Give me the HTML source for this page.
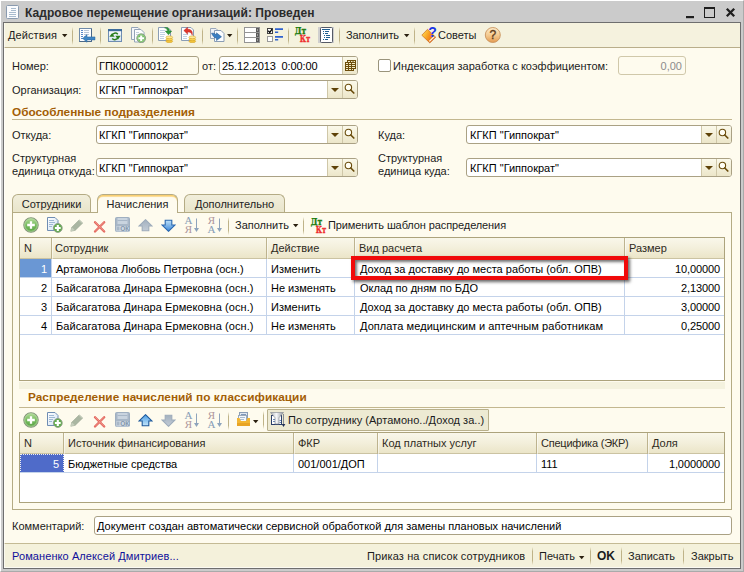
<!DOCTYPE html>
<html><head><meta charset="utf-8">
<style>
*{box-sizing:border-box;margin:0;padding:0}
html,body{width:744px;height:572px;overflow:hidden;background:#cbcbcb}
body{position:relative;font-family:"Liberation Sans",sans-serif;font-size:11px;color:#000;line-height:13px}
.a{position:absolute;white-space:nowrap}
#frame{left:0;top:0;width:744px;height:572px;background:#cbcbcb;border-left:1px solid #fff;border-top:1px solid #fff;border-right:1px solid #aaa;border-bottom:1px solid #aaa}
#inner{left:3px;top:22px;width:738px;height:547px;border:1px solid #6e6e6e;background:#fefbee}
#title{left:25px;top:6px;font-weight:bold;font-size:12px;color:#2a2a2a;line-height:14px;letter-spacing:0.05px}
#tb{left:4px;top:23px;width:736px;height:25px;background:#f5f2de;border-bottom:1px solid #b9ae8a}
.sep{width:1px;background:linear-gradient(rgba(190,178,136,0),#bfb388 25%,#bfb388 75%,rgba(190,178,136,0))}
.lbl{color:#1c1c1c}
.inp{background:#fff;border:1px solid #aaa184;border-radius:3px;height:19px;line-height:17px;padding-top:1px;padding-left:2px;font-size:11px;overflow:hidden}
.hd{font-weight:bold;color:#a35e05;font-size:11.8px;letter-spacing:0}
.hline{height:1px;background:#c3b78f}
.tab{height:18px;border:1px solid #b4ab84;border-bottom:none;border-radius:6px 6px 0 0;background:linear-gradient(#f1eedb,#e9e5cb);text-align:center;line-height:18px;color:#222}
.tab.act{background:#fefbee;height:19px;line-height:18px;box-shadow:inset 0 1.500px 0 #f9cf72,inset 0 3px 1px -1px rgba(250,214,130,.45)}
.grid{background:#fff;border:1px solid #aca37c}
.gh{background:linear-gradient(#f9f7ea,#f3efdb 50%,#ebe5c8);height:21px;border-bottom:1px solid #cbc3a2}
.vl{width:1px;background:#bdb38e;box-shadow:1px 0 0 rgba(255,255,255,.5)}
.cl{width:1px;background:#c4d3ea}
.rl{height:1px;background:#c4d3ea}
.dd{background:linear-gradient(#fbf9ea,#ece6c9);border-left:1px solid #cfc7a8;width:15px;height:17px}
</style></head><body>
<div class="a" id="frame"></div>
<div class="a" id="inner"></div>
<svg class="a" style="left:6px;top:5px" width="13" height="14" viewBox="0 0 13 14"><rect x=".5" y=".5" width="12" height="13" rx="1" fill="#fbfcfe" stroke="#8a9bb0"/><path d="M5 3.500h5M5 5.500h5M3 7.500h7M3 9.500h7M3 11.500h7" stroke="#a9bccf" stroke-width="1"/></svg>
<div class="a" id="title">Кадровое перемещение организаций: Проведен</div>
<svg class="a" style="left:684px;top:5px" width="54" height="15" viewBox="0 0 54 15"><rect x="2" y="11" width="8" height="2.200" fill="#1e1e1e"/><rect x="20.500" y="3" width="10" height="9.500" fill="none" stroke="#1e1e1e" stroke-width="1"/><rect x="20" y="2" width="11" height="2" fill="#1e1e1e"/><path d="M42.800 3.800l7.400 7.400M50.200 3.800l-7.400 7.400" stroke="#1e1e1e" stroke-width="2.300"/></svg>
<div class="a" id="tb"></div>
<div class="a lbl" style="left:8px;top:29px;letter-spacing:0.1px">Действия</div>
<svg class="a" style="left:62px;top:34px" width="6" height="4" viewBox="0 0 6 4"><path d="M0 0h5.400l-2.700 3.300z" fill="#2a2010"/></svg>
<div class="a sep" style="left:72px;top:27px;height:18px"></div>
<div class="a lbl" style="left:346px;top:29px;letter-spacing:-0.12px">Заполнить</div>
<svg class="a" style="left:404px;top:34px" width="6" height="4" viewBox="0 0 6 4"><path d="M0 0h5.400l-2.700 3.300z" fill="#2a2010"/></svg>
<div class="a sep" style="left:414px;top:27px;height:18px"></div>
<div class="a lbl" style="left:438px;top:29px">Советы</div>
<!-- main toolbar icons -->
<div class="a sep" style="left:100px;top:27px;height:18px"></div>
<div class="a sep" style="left:152px;top:27px;height:18px"></div>
<div class="a sep" style="left:202px;top:27px;height:18px"></div>
<div class="a sep" style="left:237px;top:27px;height:18px"></div>
<div class="a sep" style="left:288px;top:27px;height:18px"></div>
<div class="a sep" style="left:339px;top:27px;height:18px"></div>
<svg class="a" style="left:79px;top:28px" width="17" height="15" viewBox="0 0 17 15"><rect x=".5" y=".5" width="12" height="13" fill="#fdfeff" stroke="#6f8aa8"/><path d="M12.500 1v12.500h-12" fill="none" stroke="#4a6888"/><path d="M2 2.500h2M2 4.500h2M2 6.500h2M2 8.500h2M2 10.500h2" stroke="#5a8ac8"/><path d="M5 2.500h5M5 4.500h5M5 6.500h5M5 8.500h2" stroke="#b9c6d6"/><path d="M3.700 10.400l4.300-3.800v2.300h8v3h-8v2.400z" fill="#3f86c4" stroke="#2c699f" stroke-width=".5"/></svg>
<svg class="a" style="left:108px;top:29px" width="14" height="13" viewBox="0 0 14 13"><defs><linearGradient id="wg" x1="0" y1="0" x2="0" y2="1"><stop offset="0" stop-color="#fff"/><stop offset="1" stop-color="#d3e2f1"/></linearGradient></defs><rect x=".5" y=".5" width="13" height="12" fill="url(#wg)" stroke="#6f8db3"/><rect x="0" y="0" width="14" height="2.200" fill="#3d6c9c"/><path d="M4 6.500a3.300 3 0 0 1 5.800-1.300M10 8.200a3.300 3 0 0 1-5.800 1.300" fill="none" stroke="#2a7d1c" stroke-width="1.500"/><path d="M1.300 7.800l2.700-3.600 2.700 3.600z" fill="#2a7d1c"/><path d="M12.700 6.800l-2.700 3.600-2.700-3.600z" fill="#2a7d1c"/></svg>
<svg class="a" style="left:130px;top:27px" width="17" height="16" viewBox="0 0 17 16"><path d="M1.500.5h6.500l2 2v10h-8.500z" fill="#f4f6f9" stroke="#94a4b8"/><path d="M4.500 2.500h6.500l3 3v9.500h-9.500z" fill="#fdfeff" stroke="#94a4b8"/><path d="M6 5.500h3M6 7.500h3" stroke="#c4d0de"/><circle cx="11.200" cy="11.200" r="4.400" fill="#6cba5c" stroke="#8a9a84" stroke-width=".9"/><circle cx="11.200" cy="11.200" r="3.600" fill="none" stroke="#a9d89c" stroke-width=".6"/><path d="M11.200 8.400v5.600M8.400 11.200h5.600" stroke="#fff" stroke-width="2.100"/></svg>
<svg class="a" style="left:158px;top:27px" width="16" height="16" viewBox="0 0 16 16"><path d="M.5.500h9.500l2.500 2.500v10.500h-12z" fill="#fdfeff" stroke="#8a9db5"/><path d="M2 3.500h5M2 5.500h5M2 7.500h5M2 9.500h4M2 11.500h4" stroke="#c0d0e2" /><path d="M6.500.8c3-.8 5 .5 5 3.200h2.300l-3.300 3.800-3.300-3.800h2.300c0-1.500-1-2.500-3-3.200z" fill="#2f9a3a" stroke="#1f7528" stroke-width=".4"/><ellipse cx="11.300" cy="14.300" rx="3.400" ry="1.400" fill="#f3c33a" stroke="#cf9c1c" stroke-width=".5"/><ellipse cx="11.300" cy="12.300" rx="3.400" ry="1.400" fill="#f9d458" stroke="#cf9c1c" stroke-width=".5"/><ellipse cx="11.300" cy="10.300" rx="3.400" ry="1.400" fill="#ffe993" stroke="#cf9c1c" stroke-width=".5"/></svg>
<svg class="a" style="left:181px;top:27px" width="16" height="16" viewBox="0 0 16 16"><path d="M.5.500h9.500l2.500 2.500v10.500h-12z" fill="#fdfeff" stroke="#8a9db5"/><path d="M2 7.500h5M2 9.500h4M2 11.500h4" stroke="#c0d0e2"/><path d="M2.800 3.600l3.800-3.400v2.100c3.600-.2 5.400 2 4.600 6-.7-2.600-2-3.400-4.600-3.300v2.200z" fill="#e0352c" stroke="#b01e18" stroke-width=".4"/><ellipse cx="11.300" cy="14.300" rx="3.400" ry="1.400" fill="#f3c33a" stroke="#cf9c1c" stroke-width=".5"/><ellipse cx="11.300" cy="12.300" rx="3.400" ry="1.400" fill="#f9d458" stroke="#cf9c1c" stroke-width=".5"/><ellipse cx="11.300" cy="10.300" rx="3.400" ry="1.400" fill="#ffe993" stroke="#cf9c1c" stroke-width=".5"/></svg>
<svg class="a" style="left:210px;top:28px" width="15" height="14" viewBox="0 0 15 14"><path d="M.5.500h5.500l2 2v8h-7.500z" fill="#eef1f5" stroke="#9aa8ba"/><path d="M4.500 2.500h6.500l3 3v8h-9.500z" fill="#fbfdff" stroke="#8a9db5"/><path d="M1.500 5.200c2.500-.2 4 .5 5 1.800v-2.200l5 4-5 3.700v-2.300c-2-.3-3.500-1.800-5-5z" fill="#3a7ec2" stroke="#1f558f" stroke-width=".5"/></svg>
<svg class="a" style="left:227px;top:34px" width="6" height="4" viewBox="0 0 6 4"><path d="M0 0h5.400l-2.700 3.300z" fill="#2a2010"/></svg>
<svg class="a" style="left:244px;top:27px" width="16" height="16" viewBox="0 0 16 16"><g fill="#fff" stroke="#949494"><rect x=".5" y=".5" width="15" height="5"/><rect x=".5" y="5.500" width="15" height="5"/><rect x=".5" y="10.500" width="15" height="5"/></g><g fill="#5c5c5c"><rect x="12" y="1" width="3" height="4"/><rect x="12" y="6" width="3" height="4"/><rect x="12" y="11" width="3" height="4"/></g><g fill="#d8d8d8"><rect x="13" y="2.500" width="1" height="1"/><rect x="13" y="7.500" width="1" height="1"/><rect x="13" y="12.500" width="1" height="1"/></g></svg>
<svg class="a" style="left:267px;top:28px" width="17" height="14" viewBox="0 0 17 14"><rect x=".5" y=".5" width="5" height="5" fill="#fff" stroke="#444"/><path d="M1.300 2.800l1.500 1.700 2.200-3.300" stroke="#000" fill="none" stroke-width="1.300"/><rect x=".5" y="8.500" width="5" height="5" fill="#fff" stroke="#9a9a9a"/><path d="M8 1.200h8M8 8.800h8" stroke="#2f62cf" stroke-width="1.800"/><path d="M8 4.200h3.200M8 11.800h3.200" stroke="#2f62cf" stroke-width="1.600"/></svg>
<svg class="a" style="left:293px;top:27px" width="20" height="17" viewBox="0 0 20 17"><text x="1.700" y="6.900" textLength="11.500" lengthAdjust="spacingAndGlyphs" font-family="DejaVu Serif,serif" font-weight="bold" font-size="8.400" fill="#1c7c10" stroke="#1c7c10" stroke-width=".35">Дт</text><text x="6.700" y="14.600" textLength="10.500" lengthAdjust="spacingAndGlyphs" font-family="DejaVu Serif,serif" font-weight="bold" font-size="8.400" fill="#ee2e2e" stroke="#ee2e2e" stroke-width=".35">Кт</text></svg>
<svg class="a" style="left:318px;top:26px" width="16" height="18" viewBox="0 0 16 18"><rect x="0" y="1" width="16" height="16" fill="#cfcfcf"/><rect x="2.500" y="1.500" width="12" height="15" rx="1" fill="#fff" stroke="#555a66"/><path d="M4 3.500h8" stroke="#1f5f8f"/><path d="M5 5.500h1M7 5.500h4M5 7.500h1M7 7.500h3M6 9.500h1M8 9.500h4M6 11.500h1M8 11.500h4M5 13.500h1M7 13.500h3" stroke="#1f5f8f"/></svg>
<svg class="a" style="left:420px;top:26px" width="18" height="18" viewBox="0 0 18 18"><defs><linearGradient id="bk" x1="0" y1=".3" x2="1" y2=".8"><stop offset="0" stop-color="#ffdc50"/><stop offset=".45" stop-color="#f79a20"/><stop offset="1" stop-color="#d8501a"/></linearGradient></defs><path d="M1.800 9.200l5.700-5.900 8.200 7.900-5.900 5.700z" fill="url(#bk)" stroke="#c05a14" stroke-width=".6"/><path d="M9.300 15.400l5-4.900" stroke="#fff4e0" stroke-width="1.300"/><text x="8.300" y="10.500" font-family="Liberation Sans,sans-serif" font-weight="bold" font-size="14" fill="#1a36e6">?</text></svg>
<svg class="a" style="left:484px;top:26px" width="18" height="18" viewBox="0 0 18 18"><defs><linearGradient id="hg" x1="0" y1="0" x2="0" y2="1"><stop offset="0" stop-color="#fdeccb"/><stop offset=".55" stop-color="#f3c88c"/><stop offset="1" stop-color="#e49a50"/></linearGradient></defs><circle cx="8.800" cy="9" r="7.500" fill="url(#hg)" stroke="#c8935c" stroke-width=".9"/><text x="8.800" y="13.200" text-anchor="middle" font-family="Liberation Sans,sans-serif" font-size="12" fill="#5e3c1a" stroke="#5e3c1a" stroke-width=".35">?</text></svg>

<div class="a lbl" style="left:12px;top:60px">Номер:</div>
<div class="a inp" style="left:96px;top:56px;width:103px;background:#fefbee;">ГПК00000012</div>
<div class="a lbl" style="left:202px;top:60px">от:</div>
<div class="a inp" style="left:219px;top:56px;width:139px;letter-spacing:-0.13px;">25.12.2013&nbsp; 0:00:00</div><div class="a dd" style="left:342px;top:57px;border-radius:0 2px 2px 0"></div><svg class="a" style="left:345px;top:60px" width="11" height="11" viewBox="0 0 11 11"><path d="M2 0h9v9h-2v2h-9v-9h2z" fill="#6e4e0c"/><path d="M3 1.500h2M6 1.500h1.500M8.500 1.500h1.500M1 3.500h2M4 3.500h2M7 3.500h3M1 5.500h2M4 5.500h2M7 5.500h3M1 7.500h2M4 7.500h2M7 7.500h3M1 9.500h2M4 9.500h2M7 9.500h1" stroke="#f4ecc6" stroke-width="1"/></svg>
<div class="a" style="left:378px;top:59px;width:13px;height:13px;border:1px solid #9a947c;border-radius:2px;background:#fff"></div>
<div class="a lbl" style="left:393px;top:60px">Индексация заработка с коэффициентом:</div>
<div class="a inp" style="left:618px;top:56px;width:68px;background:#fefbee;border-color:#d0c8aa;color:#8c8c8c;text-align:right;padding-right:3px;">0,00</div>
<div class="a lbl" style="left:12px;top:84px">Организация:</div>
<div class="a inp" style="left:96px;top:80px;width:262px;">КГКП "Гиппократ"</div><div class="a dd" style="left:327px;top:81px"></div><div class="a dd" style="left:342px;top:81px;border-radius:0 2px 2px 0"></div><div class="a" style="left:331px;top:88px;border:4px solid transparent;border-top:4px solid #5e4208;border-bottom:none;width:0;height:0"></div><svg class="a" style="left:344px;top:83px" width="12" height="12" viewBox="0 0 12 12"><circle cx="4.400" cy="4.500" r="3.200" fill="#fffef4" stroke="#6a4c0c" stroke-width="1.100"/><path d="M6.800 7l3 3" stroke="#6a4c0c" stroke-width="1.700" stroke-linecap="round"/></svg>
<div class="a hd" style="left:12px;top:106px">Обособленные подразделения</div>
<div class="a hline" style="left:12px;top:119px;width:720px"></div>
<div class="a lbl" style="left:12px;top:129px">Откуда:</div>
<div class="a inp" style="left:96px;top:125px;width:262px;">КГКП "Гиппократ"</div><div class="a dd" style="left:327px;top:126px"></div><div class="a dd" style="left:342px;top:126px;border-radius:0 2px 2px 0"></div><div class="a" style="left:331px;top:133px;border:4px solid transparent;border-top:4px solid #5e4208;border-bottom:none;width:0;height:0"></div><svg class="a" style="left:344px;top:128px" width="12" height="12" viewBox="0 0 12 12"><circle cx="4.400" cy="4.500" r="3.200" fill="#fffef4" stroke="#6a4c0c" stroke-width="1.100"/><path d="M6.800 7l3 3" stroke="#6a4c0c" stroke-width="1.700" stroke-linecap="round"/></svg>
<div class="a lbl" style="left:378px;top:129px">Куда:</div>
<div class="a inp" style="left:466px;top:125px;width:266px;padding-left:3px;">КГКП "Гиппократ"</div><div class="a dd" style="left:701px;top:126px"></div><div class="a dd" style="left:716px;top:126px;border-radius:0 2px 2px 0"></div><div class="a" style="left:705px;top:133px;border:4px solid transparent;border-top:4px solid #5e4208;border-bottom:none;width:0;height:0"></div><svg class="a" style="left:718px;top:128px" width="12" height="12" viewBox="0 0 12 12"><circle cx="4.400" cy="4.500" r="3.200" fill="#fffef4" stroke="#6a4c0c" stroke-width="1.100"/><path d="M6.800 7l3 3" stroke="#6a4c0c" stroke-width="1.700" stroke-linecap="round"/></svg>
<div class="a lbl" style="left:12px;top:152px">Структурная<br>единица откуда:</div>
<div class="a inp" style="left:96px;top:158px;width:262px;">КГКП "Гиппократ"</div><div class="a dd" style="left:327px;top:159px"></div><div class="a dd" style="left:342px;top:159px;border-radius:0 2px 2px 0"></div><div class="a" style="left:331px;top:166px;border:4px solid transparent;border-top:4px solid #5e4208;border-bottom:none;width:0;height:0"></div><svg class="a" style="left:344px;top:161px" width="12" height="12" viewBox="0 0 12 12"><circle cx="4.400" cy="4.500" r="3.200" fill="#fffef4" stroke="#6a4c0c" stroke-width="1.100"/><path d="M6.800 7l3 3" stroke="#6a4c0c" stroke-width="1.700" stroke-linecap="round"/></svg>
<div class="a lbl" style="left:378px;top:152px">Структурная<br>единица куда:</div>
<div class="a inp" style="left:466px;top:158px;width:266px;padding-left:3px;">КГКП "Гиппократ"</div><div class="a dd" style="left:701px;top:159px"></div><div class="a dd" style="left:716px;top:159px;border-radius:0 2px 2px 0"></div><div class="a" style="left:705px;top:166px;border:4px solid transparent;border-top:4px solid #5e4208;border-bottom:none;width:0;height:0"></div><svg class="a" style="left:718px;top:161px" width="12" height="12" viewBox="0 0 12 12"><circle cx="4.400" cy="4.500" r="3.200" fill="#fffef4" stroke="#6a4c0c" stroke-width="1.100"/><path d="M6.800 7l3 3" stroke="#6a4c0c" stroke-width="1.700" stroke-linecap="round"/></svg>
<div class="a" style="left:12px;top:212px;width:720px;height:298px;border:1px solid #b4ab84;background:#fefbee"></div>
<div class="a tab" style="left:12px;top:194px;width:79px">Сотрудники</div>
<div class="a tab act" style="left:97px;top:194px;width:81px">Начисления</div>
<div class="a tab" style="left:184px;top:194px;width:101px">Дополнительно</div>
<svg class="a" style="left:23px;top:217px" width="16" height="16" viewBox="0 0 16 16"><defs><linearGradient id="gp217" x1="0" y1="0" x2="0" y2="1"><stop offset="0" stop-color="#b4dc9c"/><stop offset=".5" stop-color="#78bc60"/><stop offset="1" stop-color="#58a244"/></linearGradient></defs><circle cx="8" cy="8" r="7.200" fill="url(#gp217)" stroke="#84957a" stroke-width="1.100"/><circle cx="8" cy="8" r="6.300" fill="none" stroke="#b9dea6" stroke-width=".7"/><path d="M8 4.200v7.600M4.200 8h7.600" stroke="#fff" stroke-width="2.300"/></svg>
<svg class="a" style="left:47px;top:217px" width="16" height="16" viewBox="0 0 16 16"><defs><linearGradient id="dg217" x1="0" y1="0" x2="1" y2="1"><stop offset="0" stop-color="#fff"/><stop offset="1" stop-color="#cfe0f2"/></linearGradient></defs><path d="M.5.500h7.500l3 3v10h-10.500z" fill="url(#dg217)" stroke="#6f8db3"/><path d="M2 3.500h5M2 5.500h6M2 7.500h4M2 9.500h3" stroke="#9fb8d4"/><circle cx="10.800" cy="11" r="4.400" fill="#62ae4c" stroke="#8a9a84" stroke-width=".9"/><path d="M10.800 8.100v5.800M7.900 11h5.800" stroke="#fff" stroke-width="2.100"/></svg>
<svg class="a" style="left:70px;top:219px" width="14" height="13" viewBox="0 0 14 13"><path d="M.8 12.200l1-4 7.300-7.200 3.400 3.200-7.400 7.200z" fill="#aab6a2" stroke="#9aa692" stroke-width=".6"/><path d="M.8 12.200l1-4 3.200 3.100z" fill="#c6cebd"/><path d="M9.100 1l3.400 3.200" stroke="#c0c9b8" stroke-width="1.200"/></svg>
<svg class="a" style="left:93px;top:221px" width="13" height="12" viewBox="0 0 13 12"><path d="M2 1.200l9.200 9.300M11.200 1.200l-9.200 9.300" stroke="#e05a50" stroke-width="2.200" stroke-linecap="round"/><path d="M2.200 1.400l8.800 8.900M11 1.400l-8.800 8.900" stroke="#f4a59c" stroke-width=".9" stroke-linecap="round"/></svg>
<svg class="a" style="left:115px;top:217px" width="15" height="15" viewBox="0 0 15 15"><rect x=".5" y=".5" width="14" height="14" rx="1" fill="#a8b7c7" stroke="#9fafc0"/><rect x="2.500" y="1" width="10" height="6" fill="#c9d4df"/><path d="M2.500 3.500h10" stroke="#a8b7c7"/><rect x="1.500" y="9" width="12.500" height="5.500" fill="#d0dae4"/><rect x="2" y="9.500" width="2.500" height="4" fill="#a8b7c7"/><text x="5.300" y="14.200" font-family="Liberation Sans,sans-serif" font-weight="bold" font-size="6.500" fill="#8296ac">ОК</text></svg>
<svg class="a" style="left:138px;top:219px" width="15" height="13" viewBox="0 0 15 13"><defs><linearGradient id="ua" x1="0" y1="0" x2="0" y2="1"><stop offset="0" stop-color="#4c9ee4"/><stop offset="1" stop-color="#c4e6fb"/></linearGradient><linearGradient id="ug" x1="0" y1="0" x2="0" y2="1"><stop offset="0" stop-color="#a3b1bf"/><stop offset="1" stop-color="#c3ccd6"/></linearGradient><linearGradient id="da" x1="0" y1="0" x2="0" y2="1"><stop offset="0" stop-color="#bfe2fa"/><stop offset="1" stop-color="#3a86d8"/></linearGradient></defs><path d="M7.500.7l6.500 6.300h-3.200v4.800h-6.600v-4.800h-3.200z" fill="url(#ug)" stroke="#9eacbb" stroke-width="1.100"/></svg>
<svg class="a" style="left:161px;top:219px" width="15" height="13" viewBox="0 0 15 13"><path d="M7.500 12.300l6.500-6.300h-3.200v-4.800h-6.600v4.800h-3.200z" fill="url(#da)" stroke="#2a68b0" stroke-width="1.100"/></svg>
<svg class="a" style="left:184px;top:217px" width="17" height="17" viewBox="0 0 17 17"><text x=".5" y="7.300" font-family="Liberation Serif,serif" font-size="11" fill="#869cb6">A</text><text x=".8" y="15.600" font-family="Liberation Serif,serif" font-size="11" fill="#ae969c">Я</text><path d="M12.500 1.500v12" stroke="#8ea4bc" stroke-width="1"/><path d="M10 11l2.500 4 2.500-4z" fill="#8ea4bc"/></svg>
<svg class="a" style="left:207px;top:217px" width="17" height="17" viewBox="0 0 17 17"><text x=".8" y="7.300" font-family="Liberation Serif,serif" font-size="11" fill="#ae969c">Я</text><text x=".5" y="15.600" font-family="Liberation Serif,serif" font-size="11" fill="#869cb6">A</text><path d="M12.500 1.500v12" stroke="#8ea4bc" stroke-width="1"/><path d="M10 11l2.500 4 2.500-4z" fill="#8ea4bc"/></svg>
<div class="a sep" style="left:228px;top:217px;height:18px"></div>

<div class="a lbl" style="left:235px;top:219px">Заполнить</div>
<svg class="a" style="left:293px;top:224px" width="6" height="4" viewBox="0 0 6 4"><path d="M0 0h5.400l-2.700 3.300z" fill="#2a2010"/></svg>
<div class="a sep" style="left:303px;top:217px;height:18px"></div>
<svg class="a" style="left:308.500px;top:217.500px" width="20" height="17" viewBox="0 0 20 17"><text x="1.700" y="6.900" textLength="11.500" lengthAdjust="spacingAndGlyphs" font-family="DejaVu Serif,serif" font-weight="bold" font-size="8.400" fill="#1c7c10" stroke="#1c7c10" stroke-width=".35">Дт</text><text x="6.700" y="14.600" textLength="10.500" lengthAdjust="spacingAndGlyphs" font-family="DejaVu Serif,serif" font-weight="bold" font-size="8.400" fill="#ee2e2e" stroke="#ee2e2e" stroke-width=".35">Кт</text></svg>
<div class="a lbl" style="left:328px;top:219px;letter-spacing:-0.1px">Применить шаблон распределения</div>
<div class="a grid" style="left:19px;top:237px;width:706px;height:144px">
 <div class="a gh" style="left:0;top:0;width:704px"></div>
 <div class="a" style="left:4px;top:4px;color:#2e2a1c">N</div>
 <div class="a" style="left:35px;top:4px;color:#2e2a1c">Сотрудник</div>
 <div class="a" style="left:251px;top:4px;color:#2e2a1c">Действие</div>
 <div class="a" style="left:339px;top:4px;color:#2e2a1c">Вид расчета</div>
 <div class="a" style="left:609px;top:4px;color:#2e2a1c">Размер</div>
 <div class="a vl" style="left:31px;top:0;height:21px"></div>
 <div class="a cl" style="left:31px;top:21px;height:76px"></div>
 <div class="a vl" style="left:246px;top:0;height:21px"></div>
 <div class="a cl" style="left:246px;top:21px;height:76px"></div>
 <div class="a vl" style="left:334px;top:0;height:21px"></div>
 <div class="a cl" style="left:334px;top:21px;height:76px"></div>
 <div class="a vl" style="left:604px;top:0;height:21px"></div>
 <div class="a cl" style="left:604px;top:21px;height:76px"></div>
 <div class="a" style="left:0;top:21px;width:31px;height:18px;background:#6a97d4"></div>
 <div class="a rl" style="left:0;top:39px;width:704px"></div>
 <div class="a" style="left:0;top:25px;width:27px;text-align:right;color:#fff">1</div>
 <div class="a" style="left:36px;top:25px;">Артамонова Любовь Петровна (осн.)</div>
 <div class="a" style="left:251px;top:25px">Изменить</div>
 <div class="a" style="left:340px;top:25px">Доход за доставку до места работы (обл. ОПВ)</div>
 <div class="a" style="left:604px;top:25px;width:96px;text-align:right;letter-spacing:-0.1px">10,00000</div>
 <div class="a rl" style="left:0;top:58px;width:704px"></div>
 <div class="a" style="left:0;top:44px;width:27px;text-align:right;color:#000">2</div>
 <div class="a" style="left:36px;top:44px;letter-spacing:0.07px;">Байсагатова Динара Ермековна (осн.)</div>
 <div class="a" style="left:251px;top:44px">Не изменять</div>
 <div class="a" style="left:340px;top:44px">Оклад по дням по БДО</div>
 <div class="a" style="left:604px;top:44px;width:96px;text-align:right;letter-spacing:-0.1px">2,13000</div>
 <div class="a rl" style="left:0;top:77px;width:704px"></div>
 <div class="a" style="left:0;top:63px;width:27px;text-align:right;color:#000">3</div>
 <div class="a" style="left:36px;top:63px;letter-spacing:0.07px;">Байсагатова Динара Ермековна (осн.)</div>
 <div class="a" style="left:251px;top:63px">Изменить</div>
 <div class="a" style="left:340px;top:63px">Доход за доставку до места работы (обл. ОПВ)</div>
 <div class="a" style="left:604px;top:63px;width:96px;text-align:right;letter-spacing:-0.1px">3,00000</div>
 <div class="a rl" style="left:0;top:96px;width:704px"></div>
 <div class="a" style="left:0;top:82px;width:27px;text-align:right;color:#000">4</div>
 <div class="a" style="left:36px;top:82px;letter-spacing:0.07px;">Байсагатова Динара Ермековна (осн.)</div>
 <div class="a" style="left:251px;top:82px">Не изменять</div>
 <div class="a" style="left:340px;top:82px"><span style="letter-spacing:0.07px">Доплата медицинским и аптечным работникам</span></div>
 <div class="a" style="left:604px;top:82px;width:96px;text-align:right;letter-spacing:-0.1px">0,25000</div>
</div>

<div class="a" id="red" style="left:351px;top:256px;width:277px;height:24px;border:4px solid #f00a0a;box-shadow:2px 2px 3px rgba(0,0,0,.6),inset 2px 2px 3px rgba(0,0,0,.55)"></div>
<div class="a" style="left:19px;top:382px;width:706px;height:7px;background:#f4f2de"></div>
<div class="a hd" style="left:28px;top:391px;letter-spacing:0.05px">Распределение начислений по классификации</div>
<div class="a hline" style="left:19px;top:407px;width:706px"></div>
<svg class="a" style="left:23px;top:412px" width="16" height="16" viewBox="0 0 16 16"><defs><linearGradient id="gp412" x1="0" y1="0" x2="0" y2="1"><stop offset="0" stop-color="#b4dc9c"/><stop offset=".5" stop-color="#78bc60"/><stop offset="1" stop-color="#58a244"/></linearGradient></defs><circle cx="8" cy="8" r="7.200" fill="url(#gp412)" stroke="#84957a" stroke-width="1.100"/><circle cx="8" cy="8" r="6.300" fill="none" stroke="#b9dea6" stroke-width=".7"/><path d="M8 4.200v7.600M4.200 8h7.600" stroke="#fff" stroke-width="2.300"/></svg>
<svg class="a" style="left:47px;top:412px" width="16" height="16" viewBox="0 0 16 16"><defs><linearGradient id="dg412" x1="0" y1="0" x2="1" y2="1"><stop offset="0" stop-color="#fff"/><stop offset="1" stop-color="#cfe0f2"/></linearGradient></defs><path d="M.5.500h7.500l3 3v10h-10.500z" fill="url(#dg412)" stroke="#6f8db3"/><path d="M2 3.500h5M2 5.500h6M2 7.500h4M2 9.500h3" stroke="#9fb8d4"/><circle cx="10.800" cy="11" r="4.400" fill="#62ae4c" stroke="#8a9a84" stroke-width=".9"/><path d="M10.800 8.100v5.800M7.900 11h5.800" stroke="#fff" stroke-width="2.100"/></svg>
<svg class="a" style="left:70px;top:414px" width="14" height="13" viewBox="0 0 14 13"><path d="M.8 12.200l1-4 7.300-7.200 3.400 3.200-7.400 7.200z" fill="#aab6a2" stroke="#9aa692" stroke-width=".6"/><path d="M.8 12.200l1-4 3.200 3.100z" fill="#c6cebd"/><path d="M9.100 1l3.400 3.200" stroke="#c0c9b8" stroke-width="1.200"/></svg>
<svg class="a" style="left:93px;top:416px" width="13" height="12" viewBox="0 0 13 12"><path d="M2 1.200l9.200 9.300M11.200 1.200l-9.200 9.300" stroke="#e05a50" stroke-width="2.200" stroke-linecap="round"/><path d="M2.200 1.400l8.800 8.900M11 1.400l-8.800 8.900" stroke="#f4a59c" stroke-width=".9" stroke-linecap="round"/></svg>
<svg class="a" style="left:115px;top:412px" width="15" height="15" viewBox="0 0 15 15"><rect x=".5" y=".5" width="14" height="14" rx="1" fill="#a8b7c7" stroke="#9fafc0"/><rect x="2.500" y="1" width="10" height="6" fill="#c9d4df"/><path d="M2.500 3.500h10" stroke="#a8b7c7"/><rect x="1.500" y="9" width="12.500" height="5.500" fill="#d0dae4"/><rect x="2" y="9.500" width="2.500" height="4" fill="#a8b7c7"/><text x="5.300" y="14.200" font-family="Liberation Sans,sans-serif" font-weight="bold" font-size="6.500" fill="#8296ac">ОК</text></svg>
<svg class="a" style="left:138px;top:414px" width="15" height="13" viewBox="0 0 15 13"><defs><linearGradient id="ua" x1="0" y1="0" x2="0" y2="1"><stop offset="0" stop-color="#4c9ee4"/><stop offset="1" stop-color="#c4e6fb"/></linearGradient><linearGradient id="ug" x1="0" y1="0" x2="0" y2="1"><stop offset="0" stop-color="#a3b1bf"/><stop offset="1" stop-color="#c3ccd6"/></linearGradient><linearGradient id="da" x1="0" y1="0" x2="0" y2="1"><stop offset="0" stop-color="#bfe2fa"/><stop offset="1" stop-color="#3a86d8"/></linearGradient></defs><path d="M7.500.7l6.500 6.300h-3.200v4.800h-6.600v-4.800h-3.200z" fill="url(#ua)" stroke="#1f5a9c" stroke-width="1.100"/></svg>
<svg class="a" style="left:161px;top:414px" width="15" height="13" viewBox="0 0 15 13"><path d="M7.500 12.300l6.500-6.300h-3.200v-4.800h-6.600v4.800h-3.200z" fill="url(#ug)" stroke="#9eacbb" stroke-width="1.100"/></svg>
<svg class="a" style="left:184px;top:412px" width="17" height="17" viewBox="0 0 17 17"><text x=".5" y="7.300" font-family="Liberation Serif,serif" font-size="11" fill="#869cb6">A</text><text x=".8" y="15.600" font-family="Liberation Serif,serif" font-size="11" fill="#ae969c">Я</text><path d="M12.500 1.500v12" stroke="#8ea4bc" stroke-width="1"/><path d="M10 11l2.500 4 2.500-4z" fill="#8ea4bc"/></svg>
<svg class="a" style="left:207px;top:412px" width="17" height="17" viewBox="0 0 17 17"><text x=".8" y="7.300" font-family="Liberation Serif,serif" font-size="11" fill="#ae969c">Я</text><text x=".5" y="15.600" font-family="Liberation Serif,serif" font-size="11" fill="#869cb6">A</text><path d="M12.500 1.500v12" stroke="#8ea4bc" stroke-width="1"/><path d="M10 11l2.500 4 2.500-4z" fill="#8ea4bc"/></svg>
<div class="a sep" style="left:228px;top:412px;height:18px"></div>

<svg class="a" style="left:237px;top:412px" width="13" height="14" viewBox="0 0 13 14"><rect x="2.500" y=".5" width="8" height="8" fill="#dfe6ee" stroke="#8a9db5"/><path d="M4 2.500h5M4 4.500h5" stroke="#7f98b8"/><rect x="1.500" y="3.500" width="8" height="7" fill="#f4f7fa" stroke="#9aaabc"/><path d="M3 5.500h5M3 7.500h4" stroke="#a9bccf"/><path d="M0 6h2.500l1.500 3h5l1.500-3h2.500v8h-13z" fill="#f2b634"/><path d="M0 11h13v3h-13z" fill="#e8a424"/></svg>
<svg class="a" style="left:253px;top:419.5px" width="6" height="4" viewBox="0 0 6 4"><path d="M0 0h5.400l-2.700 3.300z" fill="#2a2010"/></svg>
<div class="a sep" style="left:263px;top:411px;height:18px"></div>
<div class="a" style="left:267px;top:409px;width:222px;height:22px;background:#edead3;border:1px solid #b8b08c;border-radius:1px"></div>
<svg class="a" style="left:270px;top:412px" width="16" height="16" viewBox="0 0 16 16"><defs><linearGradient id="fg" x1="0" y1="0" x2="1" y2="0"><stop offset="0" stop-color="#a9aeb4"/><stop offset=".45" stop-color="#f6f8fa"/><stop offset="1" stop-color="#8e949c"/></linearGradient></defs><rect x="1.500" y="3.500" width="10" height="9" fill="#fff" stroke="#2a3f6a"/><path d="M3 7.500h2M3 9.500h2M9.500 8.500h1.500M9.500 10.500h1.500" stroke="#6a8ab8"/><path d="M.5.500h13l-4.500 5.300v6.200h-4v-6.200z" fill="url(#fg)" stroke="#7e858e" stroke-width=".6"/><path d="M13.500 2.500v10" stroke="#1f2f55" stroke-width="1" stroke-dasharray="1 1"/><path d="M11.700 12h3.600l-1.800 3z" fill="#1f2f55"/></svg>
<div class="a lbl" style="left:288px;top:414px;letter-spacing:0.03px">По сотруднику (Артамоно../Доход за..)</div>
<div class="a grid" style="left:19px;top:432px;width:706px;height:71px">
 <div class="a gh" style="left:0;top:0;width:704px"></div>
 <div class="a" style="left:4px;top:4px;color:#2e2a1c">N</div>
 <div class="a" style="left:48px;top:4px;color:#2e2a1c">Источник финансирования</div>
 <div class="a" style="left:278px;top:4px;color:#2e2a1c">ФКР</div>
 <div class="a" style="left:362px;top:4px;color:#2e2a1c">Код платных услуг</div>
 <div class="a" style="left:521px;top:4px;color:#2e2a1c"><span style="letter-spacing:-0.22px">Специфика (ЭКР)</span></div>
 <div class="a" style="left:632px;top:4px;color:#2e2a1c">Доля</div>
 <div class="a vl" style="left:43px;top:0;height:21px"></div>
 <div class="a cl" style="left:43px;top:21px;height:19px"></div>
 <div class="a vl" style="left:273px;top:0;height:21px"></div>
 <div class="a cl" style="left:273px;top:21px;height:19px"></div>
 <div class="a vl" style="left:357px;top:0;height:21px"></div>
 <div class="a cl" style="left:357px;top:21px;height:19px"></div>
 <div class="a vl" style="left:516px;top:0;height:21px"></div>
 <div class="a cl" style="left:516px;top:21px;height:19px"></div>
 <div class="a vl" style="left:627px;top:0;height:21px"></div>
 <div class="a cl" style="left:627px;top:21px;height:19px"></div>
 <div class="a" style="left:0;top:21px;width:44px;height:19px;background:#4f6bc9;outline:1px dotted #f0f0f0;outline-offset:-1px"></div>
 <div class="a rl" style="left:0;top:39px;width:704px"></div>
 <div class="a" style="left:0;top:25px;width:39px;text-align:right;color:#fff">5</div>
 <div class="a" style="left:48px;top:25px">Бюджетные средства</div>
 <div class="a" style="left:278px;top:25px">001/001/ДОП</div>
 <div class="a" style="left:521px;top:25px">111</div>
 <div class="a" style="left:627px;top:25px;width:73px;text-align:right;letter-spacing:-0.1px">1,0000000</div>
</div>

<div class="a lbl" style="left:12px;top:520px">Комментарий:</div>
<div class="a inp" style="left:94px;top:516px;width:638px;">Документ создан автоматически сервисной обработкой для замены плановых начислений</div>
<div class="a" style="left:4px;top:543px;width:736px;height:1px;background:#c4ba94"></div>
<div class="a" style="left:4px;top:544px;width:736px;height:24px;background:#f4f1db"></div>
<div class="a" style="left:12px;top:550px;color:#10109a;letter-spacing:0.09px">Романенко Алексей Дмитриев...</div>
<div class="a lbl" style="left:367px;top:550px;letter-spacing:0.12px">Приказ на список сотрудников</div>
<div class="a sep" style="left:532px;top:547px;height:18px"></div>
<div class="a lbl" style="left:539px;top:550px">Печать</div>
<svg class="a" style="left:579px;top:556px" width="6" height="4" viewBox="0 0 6 4"><path d="M0 0h5.400l-2.700 3.300z" fill="#2a2010"/></svg>
<div class="a sep" style="left:590px;top:547px;height:18px"></div>
<div class="a lbl" style="left:597px;top:550px;font-weight:bold;font-size:12px">OK</div>
<div class="a sep" style="left:621px;top:547px;height:18px"></div>
<div class="a lbl" style="left:628px;top:550px">Записать</div>
<div class="a sep" style="left:683px;top:547px;height:18px"></div>
<div class="a lbl" style="left:691px;top:550px">Закрыть</div>
<div class="a" style="left:4px;top:567px;width:736px;height:1px;background:#fbfaf2"></div>
<div class="a" style="left:4px;top:23px;width:1px;height:545px;background:rgba(255,255,255,.55)"></div>
</body></html>
